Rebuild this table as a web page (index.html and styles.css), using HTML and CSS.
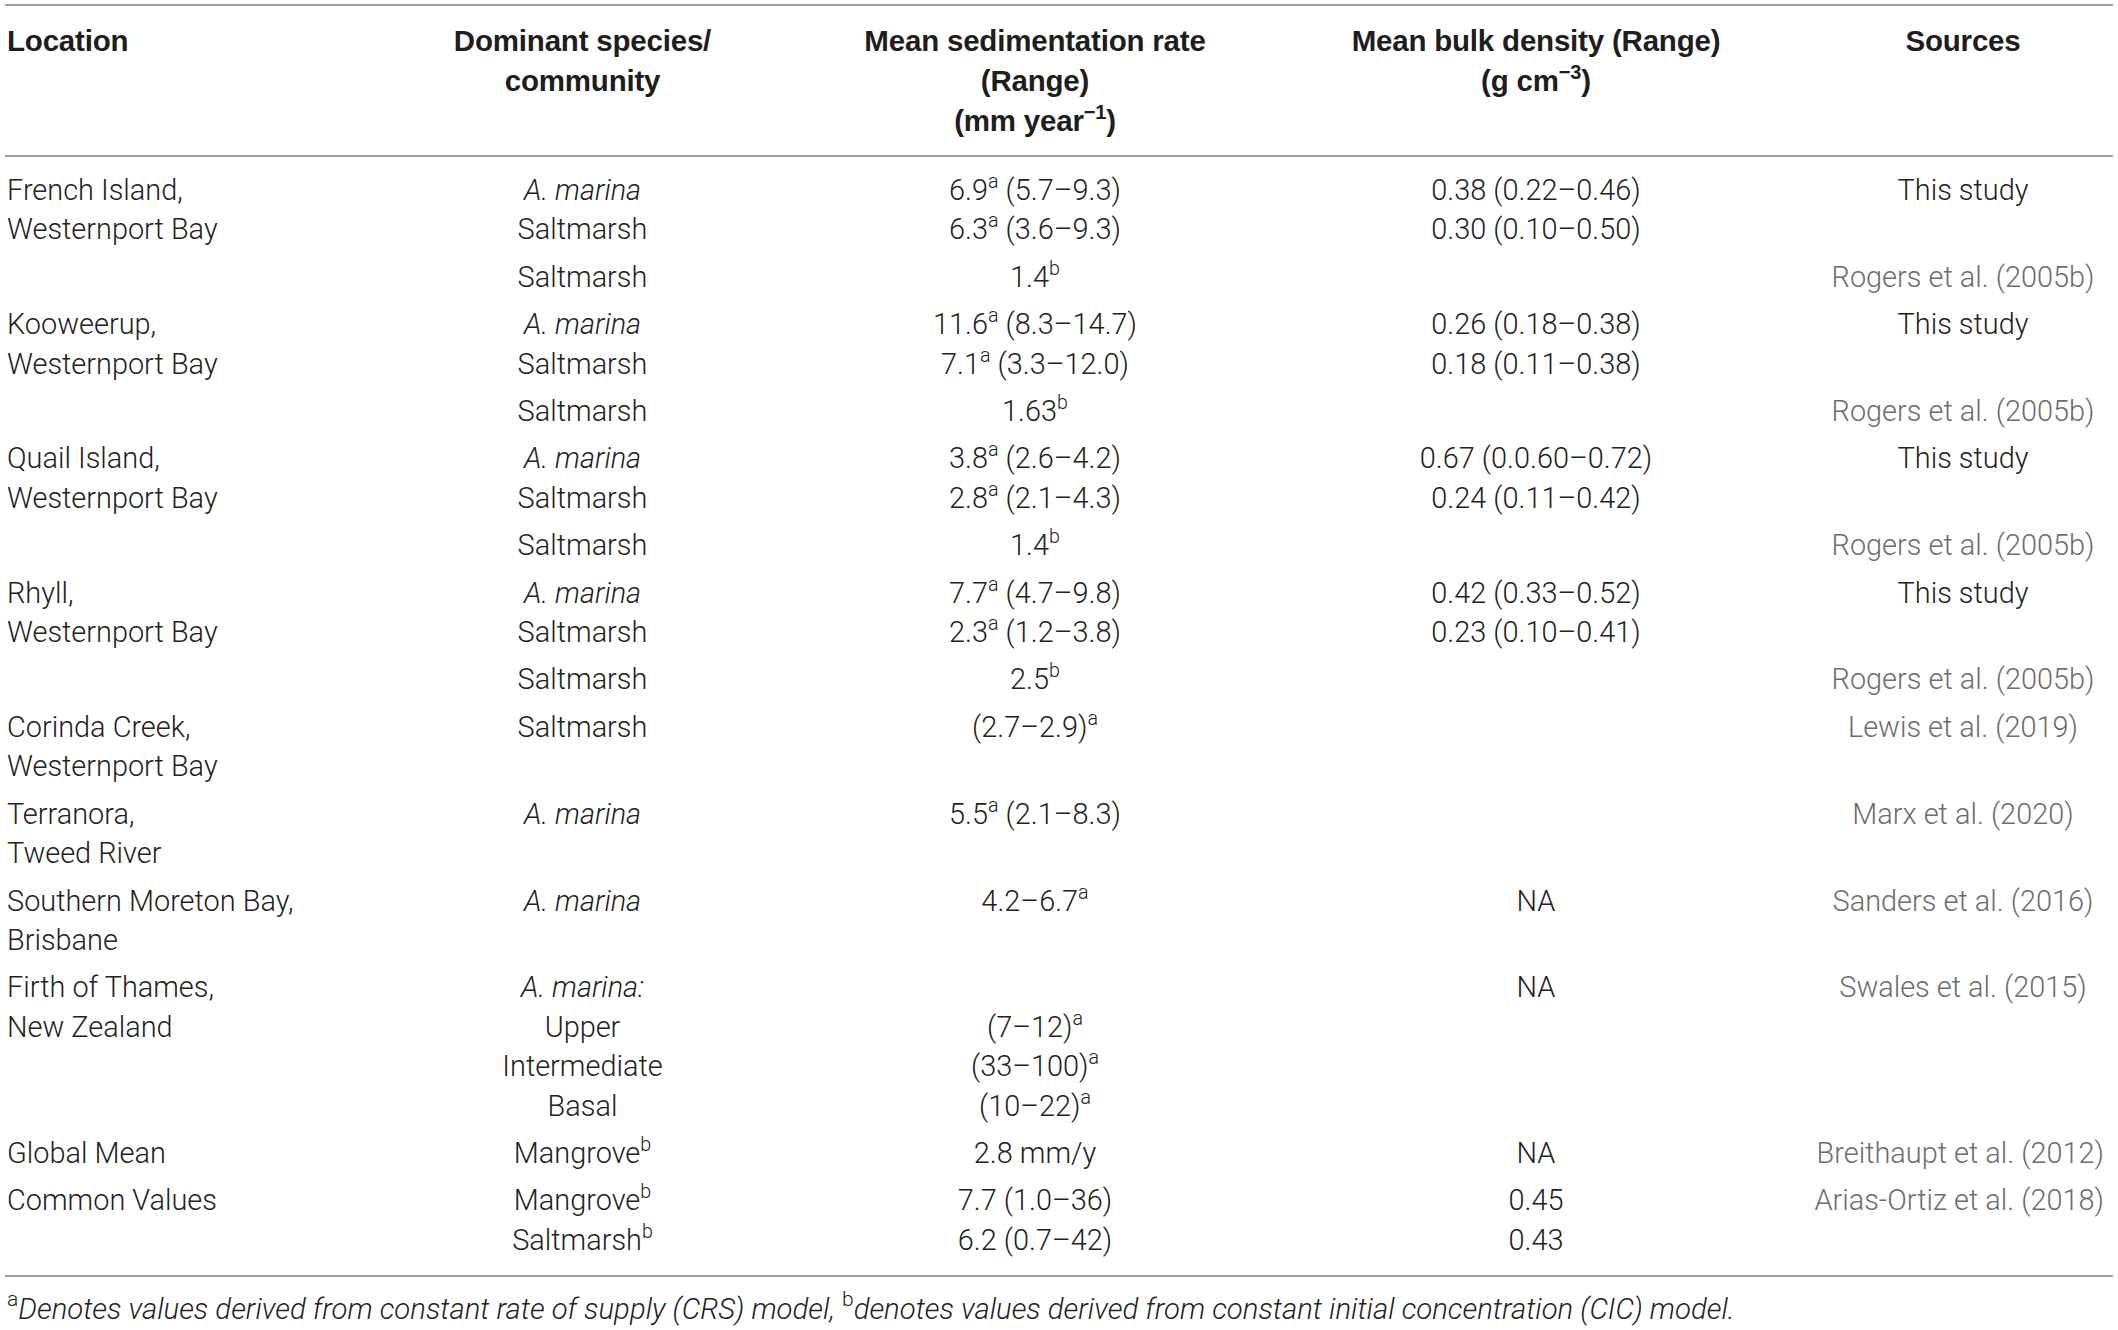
FILE: index.html
```html
<!DOCTYPE html>
<html lang="en">
<head>
<meta charset="utf-8">
<title>Sedimentation rates table</title>
<link rel="stylesheet" href="styles.css">
</head>
<body>
<div class="wrap">
<table class="data">
  <colgroup>
    <col class="c-loc">
    <col class="c-sp">
    <col class="c-sed">
    <col class="c-bd">
    <col class="c-src">
  </colgroup>
  <thead>
    <tr>
      <th class="left">Location</th>
      <th>Dominant species/<br>community</th>
      <th>Mean sedimentation rate<br>(Range)<br>(mm year<sup>−1</sup>)</th>
      <th>Mean bulk density (Range)<br>(g cm<sup>−3</sup>)</th>
      <th class="src">Sources</th>
    </tr>
  </thead>
  <tbody>
    <tr class="first">
      <td class="left">French Island,<br>Westernport Bay</td>
      <td><i>A. marina</i><br>Saltmarsh</td>
      <td>6.9<sup>a</sup> (5.7–9.3)<br>6.3<sup>a</sup> (3.6–9.3)</td>
      <td>0.38 (0.22–0.46)<br>0.30 (0.10–0.50)</td>
      <td class="src">This study</td>
    </tr>
    <tr>
      <td class="left"></td>
      <td>Saltmarsh</td>
      <td>1.4<sup>b</sup></td>
      <td></td>
      <td class="src ref">Rogers et al. (2005b)</td>
    </tr>
    <tr>
      <td class="left">Kooweerup,<br>Westernport Bay</td>
      <td><i>A. marina</i><br>Saltmarsh</td>
      <td>11.6<sup>a</sup> (8.3–14.7)<br>7.1<sup>a</sup> (3.3–12.0)</td>
      <td>0.26 (0.18–0.38)<br>0.18 (0.11–0.38)</td>
      <td class="src">This study</td>
    </tr>
    <tr>
      <td class="left"></td>
      <td>Saltmarsh</td>
      <td>1.63<sup>b</sup></td>
      <td></td>
      <td class="src ref">Rogers et al. (2005b)</td>
    </tr>
    <tr>
      <td class="left">Quail Island,<br>Westernport Bay</td>
      <td><i>A. marina</i><br>Saltmarsh</td>
      <td>3.8<sup>a</sup> (2.6–4.2)<br>2.8<sup>a</sup> (2.1–4.3)</td>
      <td>0.67 (0.0.60–0.72)<br>0.24 (0.11–0.42)</td>
      <td class="src">This study</td>
    </tr>
    <tr>
      <td class="left"></td>
      <td>Saltmarsh</td>
      <td>1.4<sup>b</sup></td>
      <td></td>
      <td class="src ref">Rogers et al. (2005b)</td>
    </tr>
    <tr>
      <td class="left">Rhyll,<br>Westernport Bay</td>
      <td><i>A. marina</i><br>Saltmarsh</td>
      <td>7.7<sup>a</sup> (4.7–9.8)<br>2.3<sup>a</sup> (1.2–3.8)</td>
      <td>0.42 (0.33–0.52)<br>0.23 (0.10–0.41)</td>
      <td class="src">This study</td>
    </tr>
    <tr>
      <td class="left"></td>
      <td>Saltmarsh</td>
      <td>2.5<sup>b</sup></td>
      <td></td>
      <td class="src ref">Rogers et al. (2005b)</td>
    </tr>
    <tr>
      <td class="left">Corinda Creek,<br>Westernport Bay</td>
      <td>Saltmarsh</td>
      <td>(2.7–2.9)<sup>a</sup></td>
      <td></td>
      <td class="src ref">Lewis et al. (2019)</td>
    </tr>
    <tr>
      <td class="left">Terranora,<br>Tweed River</td>
      <td><i>A. marina</i></td>
      <td>5.5<sup>a</sup> (2.1–8.3)</td>
      <td></td>
      <td class="src ref">Marx et al. (2020)</td>
    </tr>
    <tr>
      <td class="left">Southern Moreton Bay,<br>Brisbane</td>
      <td><i>A. marina</i></td>
      <td>4.2–6.7<sup>a</sup></td>
      <td>NA</td>
      <td class="src ref">Sanders et al. (2016)</td>
    </tr>
    <tr>
      <td class="left">Firth of Thames,<br>New Zealand</td>
      <td><i>A. marina:</i><br>Upper<br>Intermediate<br>Basal</td>
      <td>&nbsp;<br>(7–12)<sup>a</sup><br>(33–100)<sup>a</sup><br>(10–22)<sup>a</sup></td>
      <td>NA</td>
      <td class="src ref">Swales et al. (2015)</td>
    </tr>
    <tr>
      <td class="left">Global Mean</td>
      <td>Mangrove<sup>b</sup></td>
      <td>2.8 mm/y</td>
      <td>NA</td>
      <td class="src ref wide">Breithaupt et al. (2012)</td>
    </tr>
    <tr class="last">
      <td class="left">Common Values</td>
      <td>Mangrove<sup>b</sup><br>Saltmarsh<sup>b</sup></td>
      <td>7.7 (1.0–36)<br>6.2 (0.7–42)</td>
      <td>0.45<br>0.43</td>
      <td class="src ref wide">Arias-Ortiz et al. (2018)</td>
    </tr>
  </tbody>
</table>
<p class="foot"><sup>a</sup><i>Denotes values derived from constant rate of supply (CRS) model, </i><sup>b</sup><i>denotes values derived from constant initial concentration (CIC) model.</i></p>
</div>
</body>
</html>
```

FILE: styles.css
```css
html, body {
  margin: 0;
  padding: 0;
  background: #ffffff;
}

.wrap {
  padding: 4px 5px 0 5px;
  font-family: "Roboto", "Liberation Sans", sans-serif;
  color: #222222;
}

.data {
  width: 2108px;
  border-collapse: collapse;
  table-layout: fixed;
  font-size: 28.9px;
}

.c-loc { width: 415px; }
.c-sp { width: 325px; }
.c-sed { width: 580px; }
.c-bd { width: 422px; }
.c-src { width: 366px; }

.data th {
  font-family: "Liberation Sans", "Roboto", sans-serif;
  font-size: 29.5px;
  font-weight: 700;
  letter-spacing: -0.2px;
  line-height: 40px;
  text-align: center;
  vertical-align: top;
  padding: 14.5px 0 14px 0;
  border-top: 2px solid #a0a0a0;
  border-bottom: 2px solid #a0a0a0;
  color: #1e1e1e;
}

.data td {
  font-weight: 300;
  line-height: 39.4px;
  text-align: center;
  vertical-align: top;
  padding: 4px 0;
  white-space: nowrap;
}

.data .left {
  text-align: left;
  padding-left: 2px;
}

.data .src {
  padding-left: 66px;
}

.data td.ref {
  color: #6d6d6d;
}

.data td.wide {
  text-align: right;
  padding-left: 0;
  padding-right: 9px;
}

.data tr.first td {
  padding-top: 14.5px;
}

.data tr.last td {
  padding-bottom: 15px;
  border-bottom: 2px solid #a0a0a0;
}

sup {
  font-size: 0.68em;
  line-height: 0;
  vertical-align: 0.6em;
}

.foot {
  margin: 0;
  padding: 12px 0 0 2px;
  font-size: 29.3px;
  font-weight: 300;
  line-height: 40px;
  color: #222222;
}

.foot sup {
  font-style: normal;
  font-size: 0.72em;
}
```
